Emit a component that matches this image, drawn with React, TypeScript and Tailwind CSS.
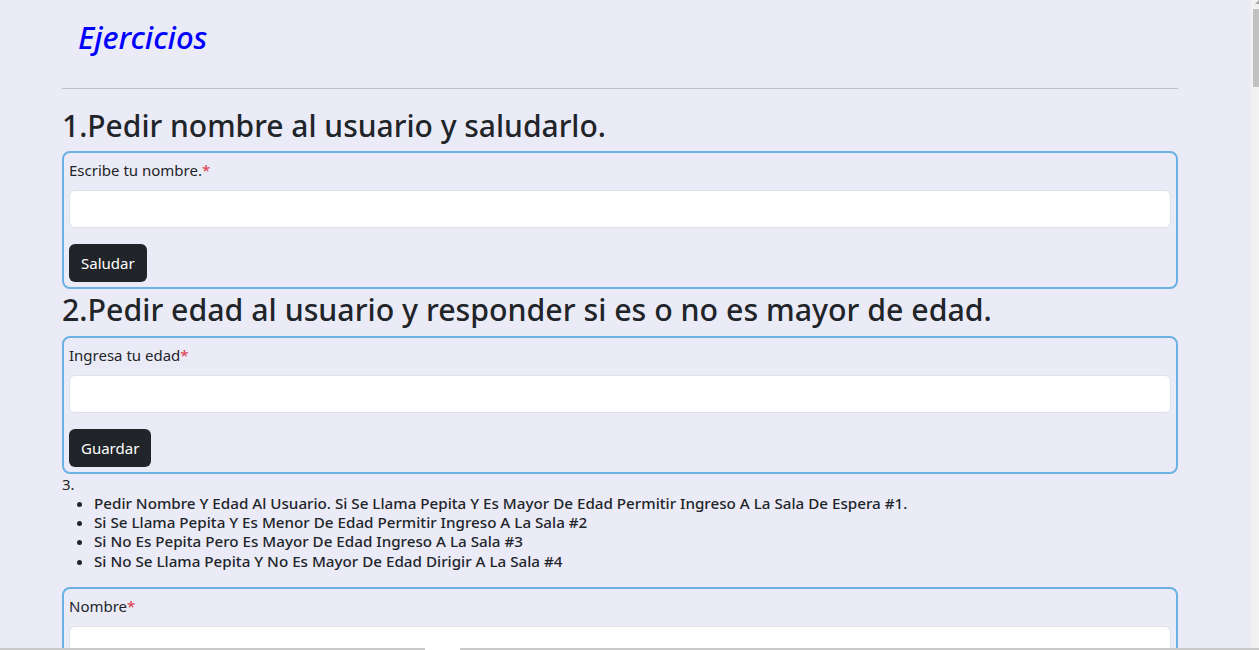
import { useState } from "react";

const font = { fontFamily: '"Noto Sans", "Open Sans", sans-serif' };

function Field({ label, button }: { label: string; button?: string }) {
  const [value, setValue] = useState("");
  return (
    <div className="border-2 border-[#6cb1e2] rounded-[8px] p-[5px]">
      <label className="block text-[15px] leading-6 mb-2 text-[#212529]">
        {label}
        <span className="text-[#dc3545]">*</span>
      </label>
      <input
        className="block w-full h-[38px] bg-white border border-[#dee2e6] rounded-md px-3 outline-none"
        value={value}
        onChange={(e) => setValue(e.target.value)}
      />
      {button && (
        <button className="mt-4 h-[38px] px-3 rounded-md bg-[#212529] text-white text-[15px]">
          {button}
        </button>
      )}
    </div>
  );
}

export default function App() {
  const rules = [
    "pedir nombre y edad al usuario. si se llama pepita y es mayor de edad permitir ingreso a la sala de espera #1.",
    "si se llama pepita y es menor de edad permitir ingreso a la sala #2",
    "si no es pepita pero es mayor de edad ingreso a la sala #3",
    "si no se llama pepita y no es mayor de edad dirigir a la sala #4",
  ];

  return (
    <div className="h-[650px] flex flex-col overflow-hidden bg-[#ebebf7] text-[#212529]" style={font}>
      <div className="flex-1 min-h-0 flex">
        <div className="flex-1 min-w-0 overflow-hidden">
          <div className="ml-[50px] w-[1140px] px-3">
            <header className="pl-4 pt-[14px] h-[88px]">
              <h1 className="text-[31px] leading-[46px] italic font-medium text-[#0000ff]">Ejercicios</h1>
            </header>
            <hr className="border-0 h-px bg-[#bdbdc6] mb-4" />

            <h2 className="text-[30px] leading-[38px] font-medium pt-[2px] mb-[6px]">
              1.Pedir nombre al usuario y saludarlo.
            </h2>
            <Field label="Escribe tu nombre." button="Saludar" />

            <h2 className="text-[30.3px] leading-[38px] font-medium mt-px pt-px mb-[7px]">
              2.Pedir edad al usuario y responder si es o no es mayor de edad.
            </h2>
            <Field label="Ingresa tu edad" button="Guardar" />

            <p className="text-[15px] leading-5 h-[20px]">3.</p>
            <ul className="list-disc pl-8 mb-4 text-[15.2px] leading-[19.2px] font-medium capitalize">
              {rules.map((r) => (
                <li key={r}>{r}</li>
              ))}
            </ul>
            <Field label="Nombre" />
          </div>
        </div>

        {/* scrollbar */}
        <div className="w-[8px] bg-[#f1f1f1] flex flex-col items-end">
          <div className="h-[9px] w-full flex items-start justify-end">
            <svg width="4" height="4" viewBox="0 0 4 4">
              <path d="M4 0 L4 4 L0 4 Z" fill="#a3a3a3" />
            </svg>
          </div>
          <div className="w-[6px] h-[78px] bg-[#c1c1c1]" />
        </div>
      </div>
      <div className="h-[2px] bg-[#c9c9c9] flex">
        <div className="ml-[425px] w-[35px] bg-white" />
      </div>
    </div>
  );
}
